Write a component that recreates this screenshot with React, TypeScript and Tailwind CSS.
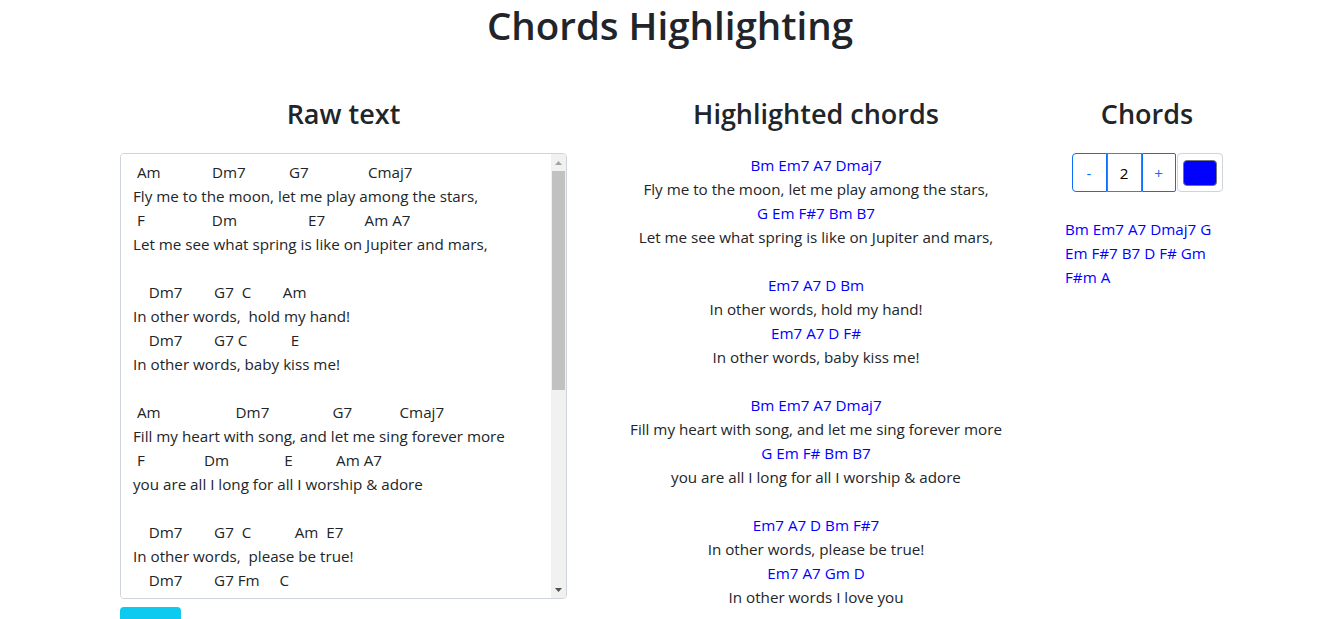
import React from 'react';

const rawText = [
  ' Am             Dm7           G7               Cmaj7',
  'Fly me to the moon, let me play among the stars,',
  ' F                 Dm                  E7          Am A7',
  'Let me see what spring is like on Jupiter and mars,',
  '',
  '    Dm7        G7  C        Am',
  'In other words,  hold my hand!',
  '    Dm7        G7 C           E',
  'In other words, baby kiss me!',
  '',
  ' Am                   Dm7                G7            Cmaj7',
  'Fill my heart with song, and let me sing forever more',
  ' F               Dm              E           Am A7',
  'you are all I long for all I worship & adore',
  '',
  '    Dm7        G7  C           Am  E7',
  'In other words,  please be true!',
  '    Dm7        G7 Fm     C',
  'In other words I love you',
].join('\n');

const highlighted: { text: string; chord?: boolean }[] = [
  { text: 'Bm Em7 A7 Dmaj7', chord: true },
  { text: 'Fly me to the moon, let me play among the stars,' },
  { text: 'G Em F#7 Bm B7', chord: true },
  { text: 'Let me see what spring is like on Jupiter and mars,' },
  { text: '' },
  { text: 'Em7 A7 D Bm', chord: true },
  { text: 'In other words, hold my hand!' },
  { text: 'Em7 A7 D F#', chord: true },
  { text: 'In other words, baby kiss me!' },
  { text: '' },
  { text: 'Bm Em7 A7 Dmaj7', chord: true },
  { text: 'Fill my heart with song, and let me sing forever more' },
  { text: 'G Em F# Bm B7', chord: true },
  { text: 'you are all I long for all I worship & adore' },
  { text: '' },
  { text: 'Em7 A7 D Bm F#7', chord: true },
  { text: 'In other words, please be true!' },
  { text: 'Em7 A7 Gm D', chord: true },
  { text: 'In other words I love you' },
];

const usedChords = 'Bm Em7 A7 Dmaj7 G Em F#7 B7 D F# Gm F#m A';

export default function App() {
  const [shift, setShift] = React.useState(2);
  const [text, setText] = React.useState(rawText);

  return (
    <div className="min-h-screen bg-white text-[#212529] font-['Open_Sans',sans-serif] text-[15.2px] leading-[24px]">
      {/* Title */}
      <h1 className="pt-px text-center text-[38.5px] leading-[48px] font-semibold mb-2">Chords Highlighting</h1>

      <div className="flex pl-[120px] pr-[111px] mt-[48px]">
        {/* Raw text */}
        <div className="w-[447px]">
          <h3 className="text-center text-[27px] leading-[34px] font-semibold mb-[22px]">Raw text</h3>
          <div className="flex h-[446px] border border-[#ced4da] rounded-[4px] overflow-hidden bg-white">
            <textarea
              value={text}
              onChange={(e) => setText(e.target.value)}
              className="flex-1 h-full px-3 py-1.5 bg-white text-[#212529] text-[15.2px] leading-[24px] resize-none outline-none overflow-hidden font-['Open_Sans',sans-serif]"
            />
            {/* scrollbar */}
            <div className="w-[15px] bg-[#f1f1f1] flex flex-col items-center">
              <div className="h-[17px] flex items-center justify-center">
                <svg width="7" height="4" viewBox="0 0 7 4">
                  <path d="M0 4 L3.5 0 L7 4 Z" fill="#a3a3a3" />
                </svg>
              </div>
              <div className="w-[13px] h-[219px] bg-[#c1c1c1]" />
              <div className="flex-1" />
              <div className="h-[17px] flex items-center justify-center">
                <svg width="7" height="4" viewBox="0 0 7 4">
                  <path d="M0 0 L7 0 L3.5 4 Z" fill="#505050" />
                </svg>
              </div>
            </div>
          </div>
          <button className="mt-2 w-[61px] h-[38px] rounded-[4px] bg-[#0dcaf0]" />
        </div>

        {/* Highlighted */}
        <div className="flex-1 mx-[15px]">
          <h3 className="text-center text-[27px] leading-[34px] font-semibold mb-[22px]">Highlighted chords</h3>
          <div className="text-center">
            {highlighted.map((line, i) => (
              <div key={i} className={`min-h-[24px] ${line.chord ? 'text-[#0000ff]' : ''}`}>
                {line.text}
              </div>
            ))}
          </div>
        </div>

        {/* Chords */}
        <div className="w-[164px]">
          <h3 className="text-center text-[27px] leading-[34px] font-semibold mb-[22px]">Chords</h3>
          <div className="flex justify-center">
            <button
              onClick={() => setShift(shift - 1)}
              className="w-[35px] h-[39px] border border-[#0d6efd] rounded-l-[4px] text-[#0d6efd] text-[15.2px]"
            >
              -
            </button>
            <div className="w-[35px] h-[39px] border border-[#767676] flex items-center justify-center text-black">
              {shift}
            </div>
            <button
              onClick={() => setShift(shift + 1)}
              className="w-[34px] h-[39px] border border-[#0d6efd] rounded-r-[2px] text-[#0d6efd] text-[15.2px]"
            >
              +
            </button>
            <div className="ml-px w-[46px] h-[39px] border border-[#ced4da] rounded-[4px] flex items-center justify-center">
              <div className="w-[34px] h-[26px] bg-[#0000ff] border border-[#767676] rounded-[4px]" />
            </div>
          </div>
          <div className="mt-[25px] w-[160px] text-[#0000ff]">{usedChords}</div>
        </div>
      </div>
    </div>
  );
}
